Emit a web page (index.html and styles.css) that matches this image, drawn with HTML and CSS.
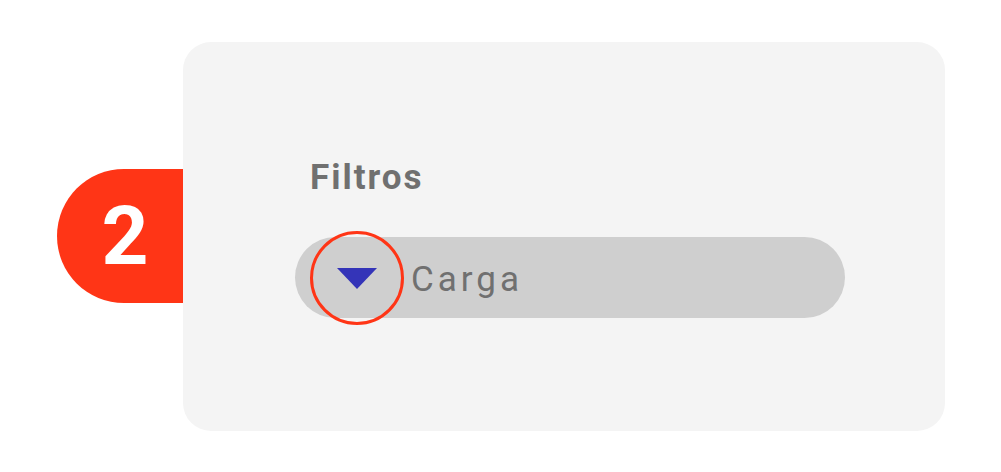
FILE: index.html
```html
<!DOCTYPE html>
<html lang="es">
<head>
    <meta charset="UTF-8">
    <meta name="viewport" content="width=device-width, initial-scale=1.0">
    <title>Filtros</title>
    <link rel="stylesheet" href="styles.css">
</head>
<body>
    <div class="wrap">
        <div class="badge">2</div>
        <div class="card">
            <p class="title">Filtros</p>
            <div class="select">
                <div class="toggle">
                    <svg width="40" height="21" viewBox="0 0 40 21"><polygon points="0,0 40,0 20,21" fill="#3434b8"/></svg>
                </div>
                <span class="label">Carga</span>
            </div>
        </div>
    </div>
</body>
</html>
```

FILE: styles.css
```css
*{
    margin: 0;
    padding: 0;
    box-sizing: border-box;
}

body{
    background: #fff;
    font-family: Roboto, "Liberation Sans", sans-serif;
}

.wrap{
    display: flex;
    align-items: flex-start;
    padding: 42px 0 0 57px;
}

.badge{
    width: 126px;
    height: 134px;
    margin-top: 127px;
    background: #ff3516;
    border-radius: 67px 0 0 67px;
    color: #fff;
    font-size: 82px;
    font-weight: 700;
    display: flex;
    align-items: center;
    justify-content: center;
    padding-left: 10px;
}

.card{
    width: 762px;
    height: 389px;
    background: #f4f4f4;
    border-radius: 28px;
    padding: 116px 0 0 112px;
}

.title{
    margin-left: 15px;
    font-size: 35px;
    line-height: 40px;
    font-weight: 700;
    color: #707070;
    letter-spacing: 2px;
}

.select{
    margin-top: 39px;
    width: 550px;
    height: 81px;
    border-radius: 41px;
    background: #cfcfcf;
    display: flex;
    align-items: center;
    padding-left: 15px;
}

.toggle{
    flex: none;
    width: 94px;
    height: 94px;
    border: 3px solid #ff3516;
    border-radius: 50%;
    display: flex;
    align-items: center;
    justify-content: center;
    padding-top: 1px;
}

.toggle svg{
    display: block;
}

.label{
    margin: 5px 0 0 7px;
    font-size: 35px;
    line-height: 40px;
    color: #707070;
    letter-spacing: 4px;
}
```
